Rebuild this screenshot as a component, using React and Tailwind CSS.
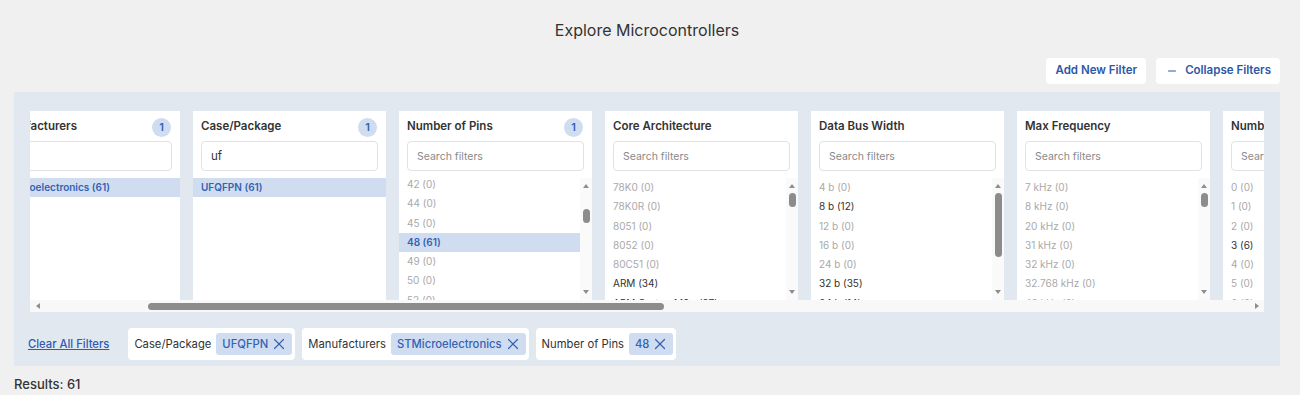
import React, { useLayoutEffect, useRef } from "react";
import { Minus, X } from "lucide-react";

const z = (l) => ({ l, c: 0 });

const pins = [8, 10, 14, 16, 20, 24, 28, 32, 36, 40, 42, 44, 45, 48, 49, 50, 52, 56, 59, 63, 64, 68, 72, 73, 80, 81, 90, 100, 112, 121, 128, 132, 135, 144, 150, 153, 160, 169, 176, 196, 201, 208, 216, 224, 240, 256, 289].map(
  (p) => (p === 48 ? { l: "48 (61)", sel: true } : z(`${p} (0)`))
);

const core = [
  z("78K0 (0)"), z("78K0R (0)"), z("8051 (0)"), z("8052 (0)"), z("80C51 (0)"),
  { l: "ARM (34)", c: 1 }, { l: "ARM Cortex-M0+ (27)", c: 1 },
  ...["AVR", "AVR32", "C166", "C28x", "ColdFire", "CIP-51", "eZ8", "H8", "HCS08", "HCS12", "M16C", "MIPS", "MSP430", "PIC", "PIC16", "PIC18", "PIC24", "dsPIC", "PowerPC", "R8C", "RH850", "RISC-V", "RL78", "RX", "S08", "SH", "ST7", "STM8", "SuperH", "TriCore", "V850", "Z8", "Z80", "Z8 Encore!", "XMEGA", "eZ80", "M32C", "H8S"].map((a) => z(`${a} (0)`)),
];

const bus = [
  z("4 b (0)"), { l: "8 b (12)", c: 1 }, z("12 b (0)"), z("16 b (0)"), z("24 b (0)"),
  { l: "32 b (35)", c: 1 }, { l: "64 b (14)", c: 1 }, z("128 b (0)"), z("8/16 b (0)"),
];

const freq = [
  "7 kHz", "8 kHz", "20 kHz", "31 kHz", "32 kHz", "32.768 kHz", "40 kHz", "100 kHz", "1 MHz", "4 MHz", "8 MHz", "10 MHz", "12 MHz", "16 MHz", "20 MHz", "24 MHz", "25 MHz", "32 MHz", "33 MHz", "40 MHz", "48 MHz", "50 MHz", "60 MHz", "64 MHz", "66 MHz", "72 MHz", "80 MHz", "84 MHz", "90 MHz", "100 MHz", "120 MHz", "133 MHz", "144 MHz", "150 MHz", "160 MHz", "168 MHz", "170 MHz", "180 MHz", "200 MHz", "216 MHz", "240 MHz", "250 MHz", "280 MHz", "400 MHz", "480 MHz",
].map((f) => z(`${f} (0)`));

const ios = Array.from({ length: 40 }, (_, i) => (i === 3 ? { l: "3 (6)", c: 1 } : z(`${i} (0)`)));

const generic = (prefix) => Array.from({ length: 20 }, (_, i) => z(`${prefix} ${i + 1} (0)`));

const cards = [
  { title: "Family", items: generic("F"), thumb: "mt-0 h-[20px]" },
  { title: "Manufacturers", badge: true, value: "st", items: [{ l: "STMicroelectronics (61)", sel: true }] },
  { title: "Case/Package", badge: true, value: "uf", items: [{ l: "UFQFPN (61)", sel: true }] },
  { title: "Number of Pins", badge: true, items: pins, scroll: 195.65, thumb: "mt-[16px] h-[13.5px]" },
  { title: "Core Architecture", items: core, thumb: "mt-0 h-[13.5px]" },
  { title: "Data Bus Width", items: bus, thumb: "mt-0 h-[63.5px]" },
  { title: "Max Frequency", items: freq, thumb: "mt-0 h-[13.5px]" },
  { title: "Number of I/Os", items: ios, thumb: "mt-0 h-[15px]" },
  { title: "Flash Size", items: generic("KB"), thumb: "mt-0 h-[20px]" },
  { title: "RAM Size", items: generic("KB"), thumb: "mt-0 h-[20px]" },
  { title: "Operating Voltage", items: generic("V"), thumb: "mt-0 h-[20px]" },
  { title: "Operating Temperature", items: generic("C"), thumb: "mt-0 h-[20px]" },
  { title: "Number of ADC Channels", items: generic("ch"), thumb: "mt-0 h-[20px]" },
  { title: "Number of Timers", items: generic("t"), thumb: "mt-0 h-[20px]" },
];

function Tri({ dir }) {
  const horiz = dir === "left" || dir === "right";
  const pts = { up: "0,4 3,0 6,4", down: "0,0 6,0 3,4", left: "4,0 4,6 0,3", right: "0,0 0,6 4,3" }[dir];
  return (
    <svg width={horiz ? 4 : 6} height={horiz ? 6 : 4} viewBox={horiz ? "0 0 4 6" : "0 0 6 4"}>
      <polygon points={pts} fill="#8e8e8e" />
    </svg>
  );
}

function VBar({ thumb }) {
  return (
    <div className="flex w-[12px] shrink-0 flex-col bg-[#fafafa]">
      <div className="flex h-[15px] shrink-0 items-center justify-center pt-[1px]">
        <Tri dir="up" />
      </div>
      <div className="flex min-h-0 flex-1 flex-col items-center">
        <div className={"w-[7px] shrink-0 rounded-full bg-[#8c8c8c] " + thumb} />
      </div>
      <div className="flex h-[15px] shrink-0 items-center justify-center pb-[1px]">
        <Tri dir="down" />
      </div>
    </div>
  );
}

function Card({ card }) {
  const listRef = useRef(null);
  useLayoutEffect(() => {
    if (card.scroll && listRef.current) listRef.current.scrollTop = card.scroll;
  }, [card.scroll]);
  return (
    <div className="flex h-[189px] w-[193px] shrink-0 flex-col bg-white">
      <div className="mt-[6px] flex h-[20px] items-center justify-between pl-[8px] pr-[9px]">
        <span className="whitespace-nowrap text-[11.5px] font-semibold text-[#333]">{card.title}</span>
        {card.badge && (
          <span className="flex h-[19px] w-[19px] items-center justify-center rounded-full bg-[#d0ddf0] text-[11px] font-semibold text-[#3562b3]">
            1
          </span>
        )}
      </div>
      <input
        readOnly
        defaultValue={card.value || ""}
        placeholder={card.value !== undefined ? "" : "Search filters"}
        className="mx-[8px] mt-[4px] h-[30px] w-[177px] shrink-0 rounded-[4px] border border-[#e2e2e2] bg-white px-[9px] text-[11.5px] text-[#333] outline-none placeholder:text-[10.5px] placeholder:text-[#8a8a8a]"
      />
      <div className="mt-[7px] flex min-h-0 flex-1">
        <div ref={listRef} className="min-w-0 flex-1 overflow-hidden">
          {card.items.map((it, i) => (
            <div
              key={i}
              className={
                "h-[19.3px] whitespace-nowrap pl-[8px] text-[10px] leading-[19.3px] " +
                (it.sel ? "bg-[#d0ddf0] font-semibold text-[#3562b3]" : it.c ? "text-[#333]" : "text-[#a9a9a9]")
              }
            >
              {it.l}
            </div>
          ))}
        </div>
        {card.thumb && <VBar thumb={card.thumb} />}
      </div>
    </div>
  );
}

function Chip({ label, value }) {
  return (
    <div className="flex h-[32px] items-center gap-[5px] rounded-[4px] bg-white pl-[6px] pr-[3px]">
      <span className="whitespace-nowrap text-[11.25px] text-[#333]">{label}</span>
      <span className="flex h-[22px] items-center gap-[2px] rounded-[3px] bg-[#d0ddf0] pl-[6px] pr-[4px] text-[11.25px] font-medium text-[#3562b3]">
        {value}
        <X size={18} strokeWidth={1.6} />
      </span>
    </div>
  );
}

export default function App() {
  const hRef = useRef(null);
  useLayoutEffect(() => {
    if (hRef.current) hRef.current.scrollLeft = 249;
  }, []);
  return (
    <div className="min-h-[395px] bg-[#f0f0f0] font-['Inter',sans-serif] text-[#333]">
      <div className="ml-[14px] w-[1266px]">
        <h1 className="pt-[20px] text-center text-[16px] leading-[20px] text-[#333]">Explore Microcontrollers</h1>
        <div className="mt-[18px] flex justify-end gap-[10px]">
          <button className="h-[26px] rounded-[4px] bg-white pl-[10px] pr-[9px] text-[11.5px] font-semibold text-[#2d57a8]">
            Add New Filter
          </button>
          <button className="flex h-[26px] items-center gap-[7px] rounded-[4px] bg-white pl-[10px] pr-[9px] text-[11.5px] font-semibold text-[#2d57a8]">
            <Minus size={12} strokeWidth={2} />
            Collapse Filters
          </button>
        </div>
        <div className="mt-[8px] bg-[#e2e8f0] px-[16px] pb-[6px] pt-[19px]">
          <div ref={hRef} className="overflow-hidden">
            <div className="flex w-max gap-[13px]">
              {cards.map((c, i) => (
                <Card key={i} card={c} />
              ))}
            </div>
          </div>
          <div className="flex h-[12px] bg-[#f8f8f8]">
            <div className="flex w-[15px] shrink-0 items-center justify-center">
              <Tri dir="left" />
            </div>
            <div className="flex min-w-0 flex-1 items-center">
              <div className="ml-[103px] h-[7px] w-[516px] rounded-full bg-[#8c8c8c]" />
            </div>
            <div className="flex w-[15px] shrink-0 items-center justify-center">
              <Tri dir="right" />
            </div>
          </div>
          <div className="ml-[-2px] mt-[16px] flex items-center">
            <a className="mr-[19px] cursor-pointer text-[11.25px] font-medium text-[#2f5bb0] underline">Clear All Filters</a>
            <div className="flex gap-[7px]">
              <Chip label="Case/Package" value="UFQFPN" />
              <Chip label="Manufacturers" value="STMicroelectronics" />
              <Chip label="Number of Pins" value="48" />
            </div>
          </div>
        </div>
        <div className="mt-[10px] text-[13px] font-medium leading-[16px] text-[#333]">Results: 61</div>
      </div>
    </div>
  );
}
